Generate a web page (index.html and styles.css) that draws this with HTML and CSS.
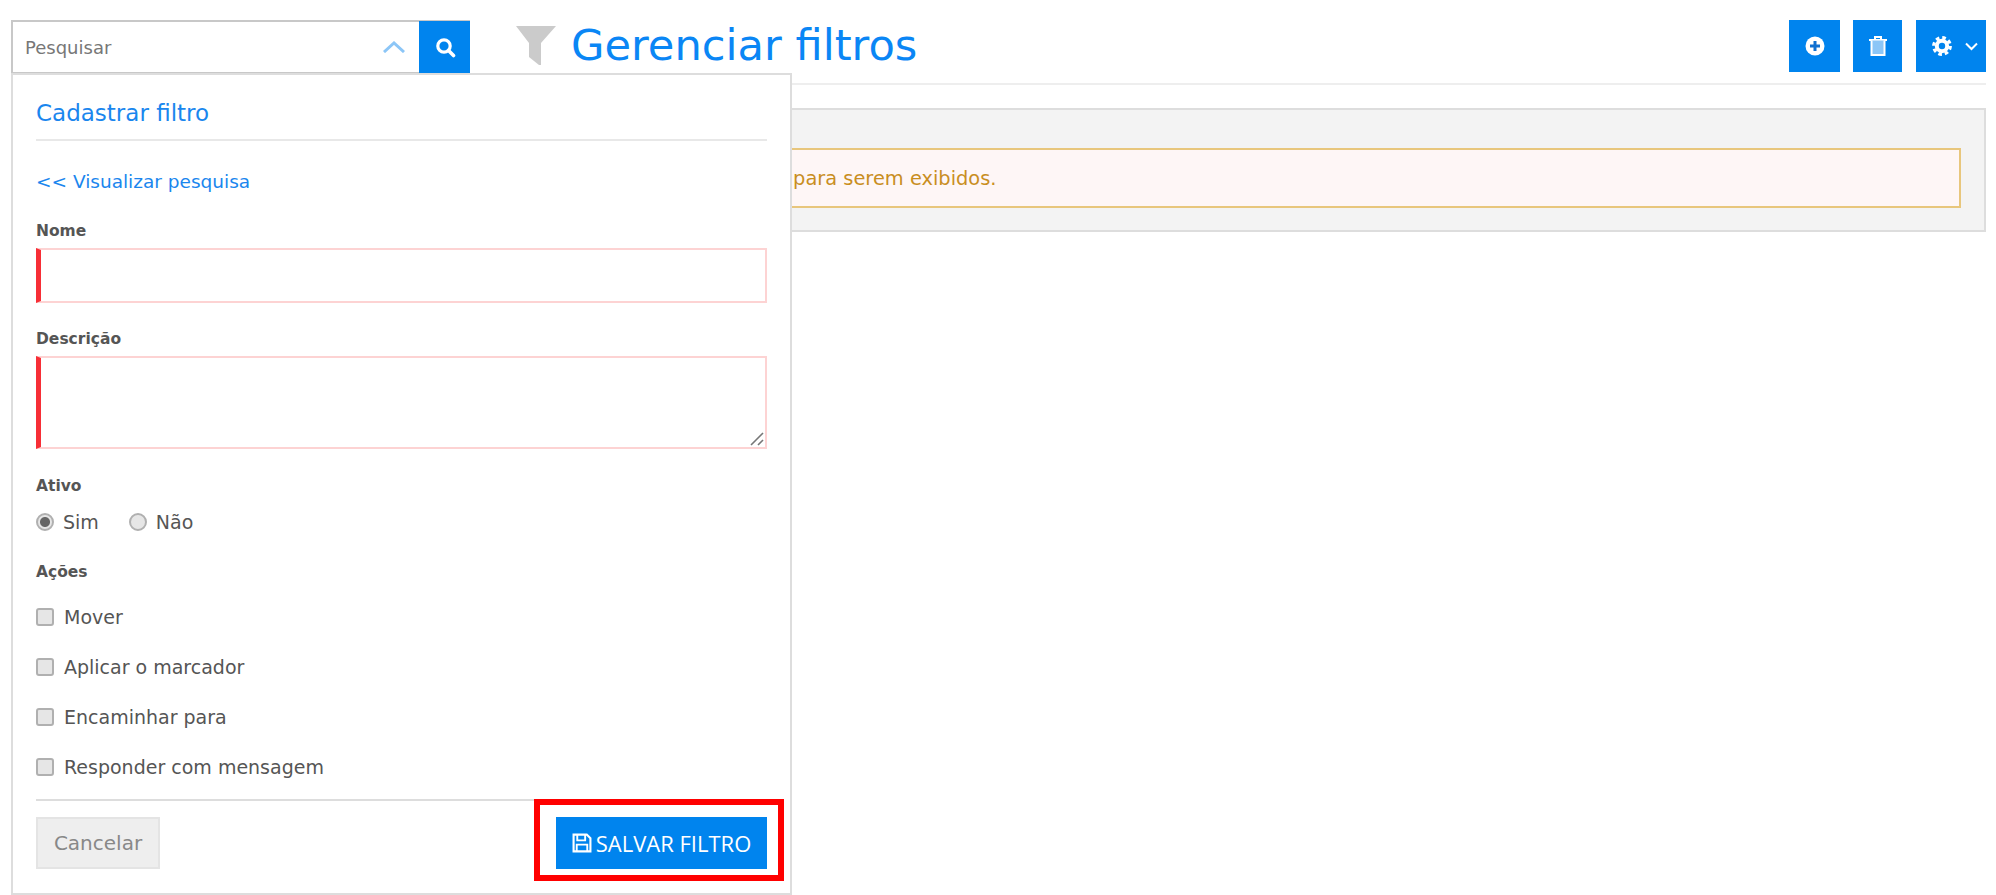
FILE: index.html
```html
<!DOCTYPE html>
<html lang="pt-BR">
<head>
<meta charset="utf-8">
<title>Gerenciar filtros</title>
<link rel="stylesheet" href="styles.css">
</head>
<body>
<div class="page">
  <aside class="search">
    <div class="search-bar">
      <span class="placeholder">Pesquisar</span>
      <svg class="caret" width="22" height="12" viewBox="0 0 22 12"><path d="M1 11 L11 2 L21 11" fill="none" stroke="#8cc6f7" stroke-width="3"/></svg>
      <button class="search-btn" type="button">
        <svg width="22" height="22" viewBox="0 0 22 22"><circle cx="10" cy="10" r="6.2" fill="none" stroke="#fff" stroke-width="3.2"/><path d="M14.5 14.5 L19.5 19.5" stroke="#fff" stroke-width="3.6" stroke-linecap="round"/></svg>
      </button>
    </div>
    <form class="panel">
      <h2 class="panel-title">Cadastrar filtro</h2>
      <a class="back-link">&lt;&lt; Visualizar pesquisa</a>
      <label class="field-label first">Nome</label>
      <input class="req-input" type="text">
      <label class="field-label">Descrição</label>
      <div class="area-wrap">
        <textarea class="req-area"></textarea>
        <svg class="grip" width="14" height="14" viewBox="0 0 14 14"><path d="M1 13 L13 1 M8 13 L13 8" stroke="#777" stroke-width="1.6"/></svg>
      </div>
      <label class="field-label ativo">Ativo</label>
      <div class="radios">
        <label class="radio-item"><input type="radio" name="ativo" checked>Sim</label>
        <label class="radio-item"><input type="radio" name="ativo">Não</label>
      </div>
      <label class="field-label acoes">Ações</label>
      <div class="checks">
        <label class="check-item"><input type="checkbox">Mover</label>
        <label class="check-item"><input type="checkbox">Aplicar o marcador</label>
        <label class="check-item"><input type="checkbox">Encaminhar para</label>
        <label class="check-item"><input type="checkbox">Responder com mensagem</label>
      </div>
      <div class="panel-footer">
        <button class="btn-cancel" type="button">Cancelar</button>
        <div class="save-wrap">
          <button class="btn-save" type="button">
            <svg width="20" height="20" viewBox="0 0 19 19"><path d="M1.5 1.5 H14 L17.5 5 V17.5 H1.5 Z" fill="none" stroke="#fff" stroke-width="2"/><path d="M5 2 V7 H12.5 V2 M4.5 17 V11 H14.5 V17" fill="none" stroke="#fff" stroke-width="1.8"/></svg>
            SALVAR FILTRO
          </button>
          <span class="highlight"></span>
        </div>
      </div>
    </form>
  </aside>
  <main class="main">
    <header class="header">
      <svg class="filter-icon" width="40" height="40" viewBox="0 0 40 40"><path d="M0 0 H40 L25 17 V39 H23 L13 31 V17 Z" fill="#cbcbcb"/></svg>
      <h1 class="title">Gerenciar filtros</h1>
      <div class="actions">
        <button class="act act-add" type="button">
          <svg width="20" height="20" viewBox="0 0 20 20"><circle cx="10" cy="10" r="9.5" fill="#fff"/><path d="M10 5 V15 M5 10 H15" stroke="#0f6fd0" stroke-width="3"/></svg>
        </button>
        <button class="act act-del" type="button">
          <svg width="20" height="22" viewBox="0 0 20 22"><path d="M1 5 H19 M7 4.5 V2 H13 V4.5" fill="none" stroke="#fff" stroke-width="2"/><path d="M3.5 5.5 V20 H16.5 V5.5" fill="#8cc6f7" stroke="#fff" stroke-width="2"/></svg>
        </button>
        <button class="act act-gear" type="button">
          <svg width="20" height="20" viewBox="0 0 20 20"><circle cx="10" cy="10" r="5.2" fill="none" stroke="#fff" stroke-width="4"/><circle cx="10" cy="10" r="8.3" fill="none" stroke="#fff" stroke-width="3.2" stroke-dasharray="3.6 2.92"/></svg>
          <svg width="13" height="9" viewBox="0 0 13 9"><path d="M1 1.5 L6.5 7 L12 1.5" fill="none" stroke="#fff" stroke-width="2"/></svg>
        </button>
      </div>
    </header>
    <section class="box">
      <div class="alert">Não existem registros para serem exibidos.</div>
    </section>
  </main>
</div>
</body>
</html>
```
FILE: styles.css
```css
* { box-sizing: border-box; }
html, body { margin: 0; height: 100%; background: #fff; overflow: hidden; }
body { font-family: "DejaVu Sans", sans-serif; color: #555; }
button { font-family: inherit; cursor: pointer; }

.page { display: flex; padding: 20px 10px 0 11px; }

.search { position: relative; width: 459px; flex: none; }
.search-bar {
  display: flex; align-items: center; height: 54px;
  border: 2px solid #c8c8c8; border-right: 0; background: #fff;
}
.placeholder { flex: 1; padding-left: 12px; font-size: 18px; color: #777; }
.caret { margin-right: 14px; }
.search-btn {
  display: flex; align-items: center; justify-content: center;
  width: 51px; height: 52px; border: 0; padding: 0; background: #0084ee;
}

.panel {
  position: absolute; top: 53px; left: 0; z-index: 2;
  display: flex; flex-direction: column;
  width: 781px; padding: 0 23px 24px 23px;
  background: #fff; border: 2px solid #ddd;
}
.panel-title {
  margin: 0; padding: 23px 0 11px; font-size: 23px; line-height: 30px; font-weight: 400;
  color: #1a86ee; border-bottom: 2px solid #e8e8e8;
}
.back-link { margin-top: 28px; font-size: 18.5px; line-height: 26px; color: #1a86ee; }
.field-label { margin-top: 26px; margin-bottom: 7px; font-size: 15.5px; line-height: 20px; font-weight: 700; color: #555; }
.field-label.ativo { margin-top: 27px; margin-bottom: 0; }
.field-label.acoes { margin-top: 28px; margin-bottom: 0; }
.req-input, .req-area {
  display: block; width: 100%; margin: 0; background: #fff; outline: 0;
  border: 2px solid #fdd3d3; border-left: 5px solid #f72e36; border-radius: 0;
}
.req-input { height: 55px; }
.req-area { height: 93px; resize: none; }
.area-wrap { position: relative; }
.grip { position: absolute; right: 3px; bottom: 3px; pointer-events: none; }

.radios { display: flex; gap: 30px; margin-top: 14px; }
.radio-item, .check-item { display: flex; align-items: center; font-size: 19px; line-height: 24px; color: #555; }
.radio-item input, .check-item input {
  appearance: none; flex: none; width: 18px; height: 18px; margin: 0;
  background: #e6e6e6; border: 2px solid #b0b0b0;
}
.radio-item input { border-radius: 50%; margin-right: 9px; }
.radio-item input:checked { background: radial-gradient(circle, #666 0 4.5px, #e6e6e6 5.5px); }
.check-item input { border-radius: 3px; margin-right: 10px; }
.checks { display: flex; flex-direction: column; gap: 26px; margin-top: 23px; }

.panel-footer {
  display: flex; justify-content: space-between;
  margin-top: 20px; padding-top: 16px; border-top: 2px solid #ddd;
}
.btn-cancel {
  width: 124px; height: 52px; padding: 0; font-size: 20px; color: #888;
  background: #eee; border: 2px solid #e4e4e4;
}
.save-wrap { position: relative; }
.btn-save {
  display: flex; align-items: center; justify-content: center; gap: 4px;
  width: 211px; height: 52px; padding: 0; border: 0;
  font: 22px "Open Sans", sans-serif; color: #fff; background: #0084ee;
}
.highlight { position: absolute; top: -18px; right: -17px; bottom: -12px; left: -22px; border: 6px solid #f00; pointer-events: none; }

.main { flex: 1; margin-left: 46px; min-width: 0; }
.header { display: flex; align-items: flex-start; height: 65px; border-bottom: 2px solid #eee; }
.filter-icon { margin-top: 6px; margin-right: 15px; flex: none; }
.title { flex: 1; margin: 0; font-size: 43.2px; line-height: 50px; font-weight: 400; color: #0a86f5; }
.actions { display: flex; gap: 13px; }
.act {
  display: flex; align-items: center; justify-content: center; gap: 13px;
  height: 52px; padding: 0; border: 0; background: #0084ee;
}
.act-add { width: 51px; }
.act-del { width: 49px; margin-right: 1px; }
.act-gear { width: 70px; padding-left: 8px; }

.box { margin-top: 23px; padding: 38px 23px 22px 23px; background: #f3f3f3; border: 2px solid #ddd; }
.alert {
  height: 60px; padding: 1px 0 0 32px; display: flex; align-items: center;
  font-size: 19.4px; color: #c98e1f; background: #fef6f6; border: 2px solid #e8c67c;
}
```
